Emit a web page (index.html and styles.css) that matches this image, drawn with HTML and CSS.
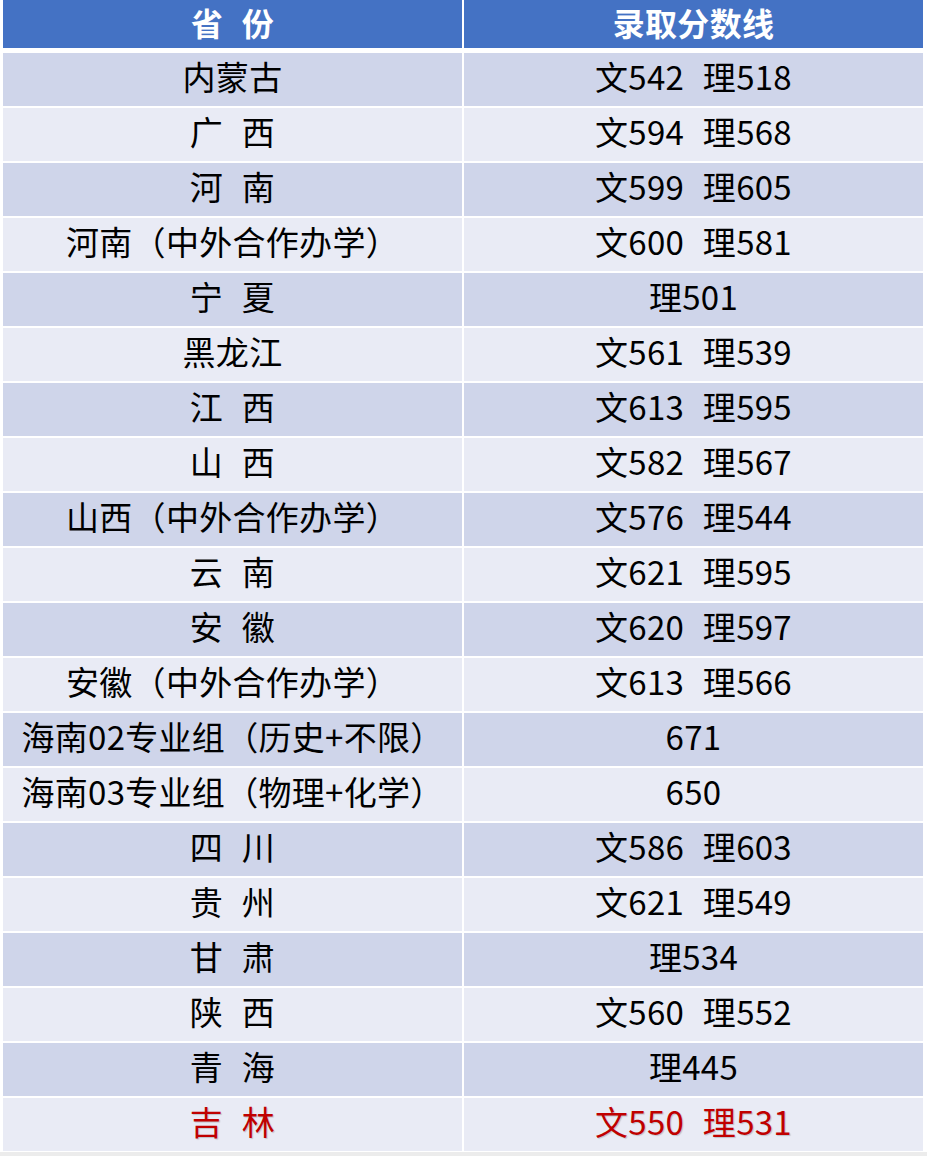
FILE: index.html
```html
<!DOCTYPE html>
<html lang="zh-CN">
<head>
<meta charset="utf-8">
<title>录取分数线</title>
<link rel="stylesheet" href="styles.css">
</head>
<body>
<div class="sheet">
  <div class="row head"><div class="cell">省 份</div><div class="cell">录取分数线</div></div>
  <div class="row odd"><div class="cell">内蒙古</div><div class="cell">文542 理518</div></div>
  <div class="row even"><div class="cell">广 西</div><div class="cell">文594 理568</div></div>
  <div class="row odd"><div class="cell">河 南</div><div class="cell">文599 理605</div></div>
  <div class="row even"><div class="cell">河南（中外合作办学）</div><div class="cell">文600 理581</div></div>
  <div class="row odd"><div class="cell">宁 夏</div><div class="cell">理501</div></div>
  <div class="row even"><div class="cell">黑龙江</div><div class="cell">文561 理539</div></div>
  <div class="row odd"><div class="cell">江 西</div><div class="cell">文613 理595</div></div>
  <div class="row even"><div class="cell">山 西</div><div class="cell">文582 理567</div></div>
  <div class="row odd"><div class="cell">山西（中外合作办学）</div><div class="cell">文576 理544</div></div>
  <div class="row even"><div class="cell">云 南</div><div class="cell">文621 理595</div></div>
  <div class="row odd"><div class="cell">安 徽</div><div class="cell">文620 理597</div></div>
  <div class="row even"><div class="cell">安徽（中外合作办学）</div><div class="cell">文613 理566</div></div>
  <div class="row odd"><div class="cell">海南02专业组（历史+不限）</div><div class="cell">671</div></div>
  <div class="row even"><div class="cell">海南03专业组（物理+化学）</div><div class="cell">650</div></div>
  <div class="row odd"><div class="cell">四 川</div><div class="cell">文586 理603</div></div>
  <div class="row even"><div class="cell">贵 州</div><div class="cell">文621 理549</div></div>
  <div class="row odd"><div class="cell">甘 肃</div><div class="cell">理534</div></div>
  <div class="row even"><div class="cell">陕 西</div><div class="cell">文560 理552</div></div>
  <div class="row odd"><div class="cell">青 海</div><div class="cell">理445</div></div>
  <div class="row even red"><div class="cell">吉 林</div><div class="cell">文550 理531</div></div>
</div>
<div class="footer"></div>
</body>
</html>
```
FILE: styles.css
```css
html, body {
  margin: 0;
  padding: 0;
  background: #ffffff;
}
body {
  font-family: "Noto Sans CJK SC", "Noto Sans", sans-serif;
  color: #000000;
}
.sheet {
  display: flex;
  flex-direction: column;
  gap: 2px;
  padding: 0 0 1px 3px;
}
.row {
  display: grid;
  grid-template-columns: 459px 459px;
  column-gap: 2px;
  height: 53px;
}
.cell {
  display: flex;
  align-items: center;
  justify-content: center;
  font-size: 33px;
  line-height: 1.2;
  white-space: pre;
  word-spacing: 11px;
  padding-bottom: 5px;
  letter-spacing: 0.3px;
}
.head {
  height: 48px;
  margin-bottom: 3px;
}
.head .cell {
  background: #4472c4;
  color: #ffffff;
  font-weight: bold;
  font-size: 32px;
  padding-bottom: 3px;
}
.odd .cell { background: #cfd5ea; }
.even .cell { background: #e9ebf5; }
.red .cell {
  color: #c00000;
  text-shadow: 1px 1px 1px rgba(0, 0, 0, 0.18);
}
.footer {
  height: 10px;
  background: #ececec;
}
```
